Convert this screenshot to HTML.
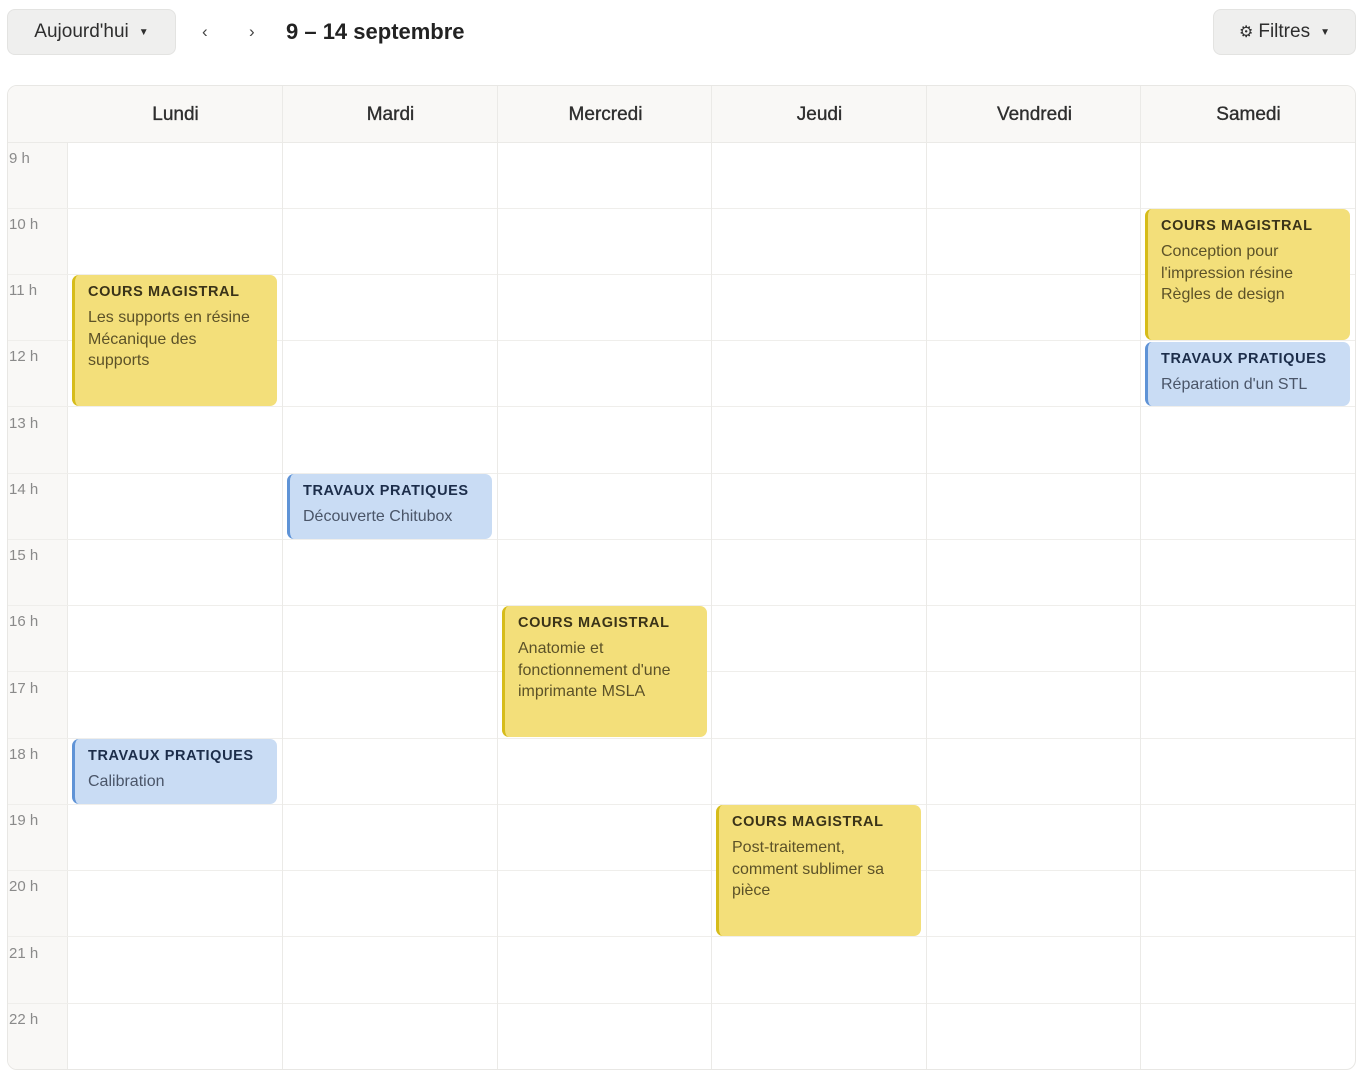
<!DOCTYPE html>
<html><head><meta charset="utf-8"><style>
*{box-sizing:border-box;margin:0;padding:0}
body{width:1365px;height:1080px;background:#fff;font-family:"Liberation Sans",sans-serif;position:relative;overflow:hidden;color:#2b2b2b}
.btn{position:absolute;background:#efefee;border:1px solid #e3e3e1;border-radius:8px;font-size:19px;color:#2e2e2e;display:flex;align-items:center;justify-content:center}
.tri{font-size:10px;margin-left:10px}
.cal{position:absolute;left:7px;top:85px;width:1349px;height:985px;border:1px solid #e8e7e4;border-radius:10px;overflow:hidden;background:#fff}
.hdr{position:absolute;left:0;top:0;width:100%;height:57px;background:#f9f8f6;border-bottom:1px solid #ebeae7}
.tc{position:absolute;left:0;top:0;width:60px;height:100%;background:#f9f8f6;border-right:1px solid #ebeae7}
.vl{position:absolute;top:0;bottom:0;width:1px;background:#ebeae7}
.hl{position:absolute;left:0;right:0;height:1px;background:#efeeeb}
.day{position:absolute;top:0;height:57px;line-height:57px;text-align:center;font-size:19px;color:#2e2e2e;width:215px;-webkit-text-stroke:0.35px #2e2e2e}
.hr{position:absolute;left:1px;font-size:15px;color:#8a8a8a}
.ev{position:absolute;border-radius:7px;padding:9px 8px 0 13px;width:205px}
.y{background:#f3df7a;border-left:3px solid #d6bc1a}
.b{background:#c9dcf4;border-left:3px solid #5f93d6}
.t{font-size:14.5px;font-weight:bold;letter-spacing:.6px;margin-bottom:7px}
.y .t{color:#3a3318}.y .d{color:#5c5228}
.b .t{color:#1c2d4a}.b .d{color:#4a5568}
.d{font-size:16px;line-height:21.5px}
</style></head><body>
<div class="btn" style="left:7px;top:9px;width:169px;height:46px">Aujourd'hui<span class="tri">▼</span></div>
<div style="position:absolute;left:202px;top:22px;font-size:17px;color:#444">‹</div>
<div style="position:absolute;left:249px;top:22px;font-size:17px;color:#444">›</div>
<div style="position:absolute;left:286px;top:19px;font-size:22px;font-weight:bold;color:#222">9 – 14 septembre</div>
<div class="btn" style="left:1213px;top:9px;width:143px;height:46px"><span style="font-size:16px;margin-right:5px">⚙</span>Filtres<span class="tri">▼</span></div>

<div class="cal">
<div class="tc"></div>
<div class="hdr"></div>
<div class="hl" style="top:122px"></div><div class="hl" style="top:188px"></div><div class="hl" style="top:254px"></div><div class="hl" style="top:320px"></div><div class="hl" style="top:387px"></div><div class="hl" style="top:453px"></div><div class="hl" style="top:519px"></div><div class="hl" style="top:585px"></div><div class="hl" style="top:652px"></div><div class="hl" style="top:718px"></div><div class="hl" style="top:784px"></div><div class="hl" style="top:850px"></div><div class="hl" style="top:917px"></div>
<div class="vl" style="left:274px"></div><div class="vl" style="left:489px"></div><div class="vl" style="left:703px"></div><div class="vl" style="left:918px"></div><div class="vl" style="left:1132px"></div>
<div class="day" style="left:60px">Lundi</div><div class="day" style="left:275px">Mardi</div><div class="day" style="left:490px">Mercredi</div><div class="day" style="left:704px">Jeudi</div><div class="day" style="left:919px">Vendredi</div><div class="day" style="left:1133px">Samedi</div>
<div class="hr" style="top:64px">9 h</div><div class="hr" style="top:130px">10 h</div><div class="hr" style="top:196px">11 h</div><div class="hr" style="top:262px">12 h</div><div class="hr" style="top:329px">13 h</div><div class="hr" style="top:395px">14 h</div><div class="hr" style="top:461px">15 h</div><div class="hr" style="top:527px">16 h</div><div class="hr" style="top:594px">17 h</div><div class="hr" style="top:660px">18 h</div><div class="hr" style="top:726px">19 h</div><div class="hr" style="top:792px">20 h</div><div class="hr" style="top:859px">21 h</div><div class="hr" style="top:925px">22 h</div>
</div>

<div class="ev y" style="left:72px;top:275px;height:131px"><div class="t">COURS MAGISTRAL</div><div class="d">Les supports en résine<br>Mécanique des<br>supports</div></div>
<div class="ev b" style="left:72px;top:739px;height:65px"><div class="t">TRAVAUX PRATIQUES</div><div class="d">Calibration</div></div>
<div class="ev b" style="left:287px;top:474px;height:65px"><div class="t">TRAVAUX PRATIQUES</div><div class="d">Découverte Chitubox</div></div>
<div class="ev y" style="left:502px;top:606px;height:131px"><div class="t">COURS MAGISTRAL</div><div class="d">Anatomie et<br>fonctionnement d'une<br>imprimante MSLA</div></div>
<div class="ev y" style="left:716px;top:805px;height:131px"><div class="t">COURS MAGISTRAL</div><div class="d">Post-traitement,<br>comment sublimer sa<br>pièce</div></div>
<div class="ev y" style="left:1145px;top:209px;height:131px"><div class="t">COURS MAGISTRAL</div><div class="d">Conception pour<br>l'impression résine<br>Règles de design</div></div>
<div class="ev b" style="left:1145px;top:342px;height:64px"><div class="t">TRAVAUX PRATIQUES</div><div class="d">Réparation d'un STL</div></div>
</body></html>
